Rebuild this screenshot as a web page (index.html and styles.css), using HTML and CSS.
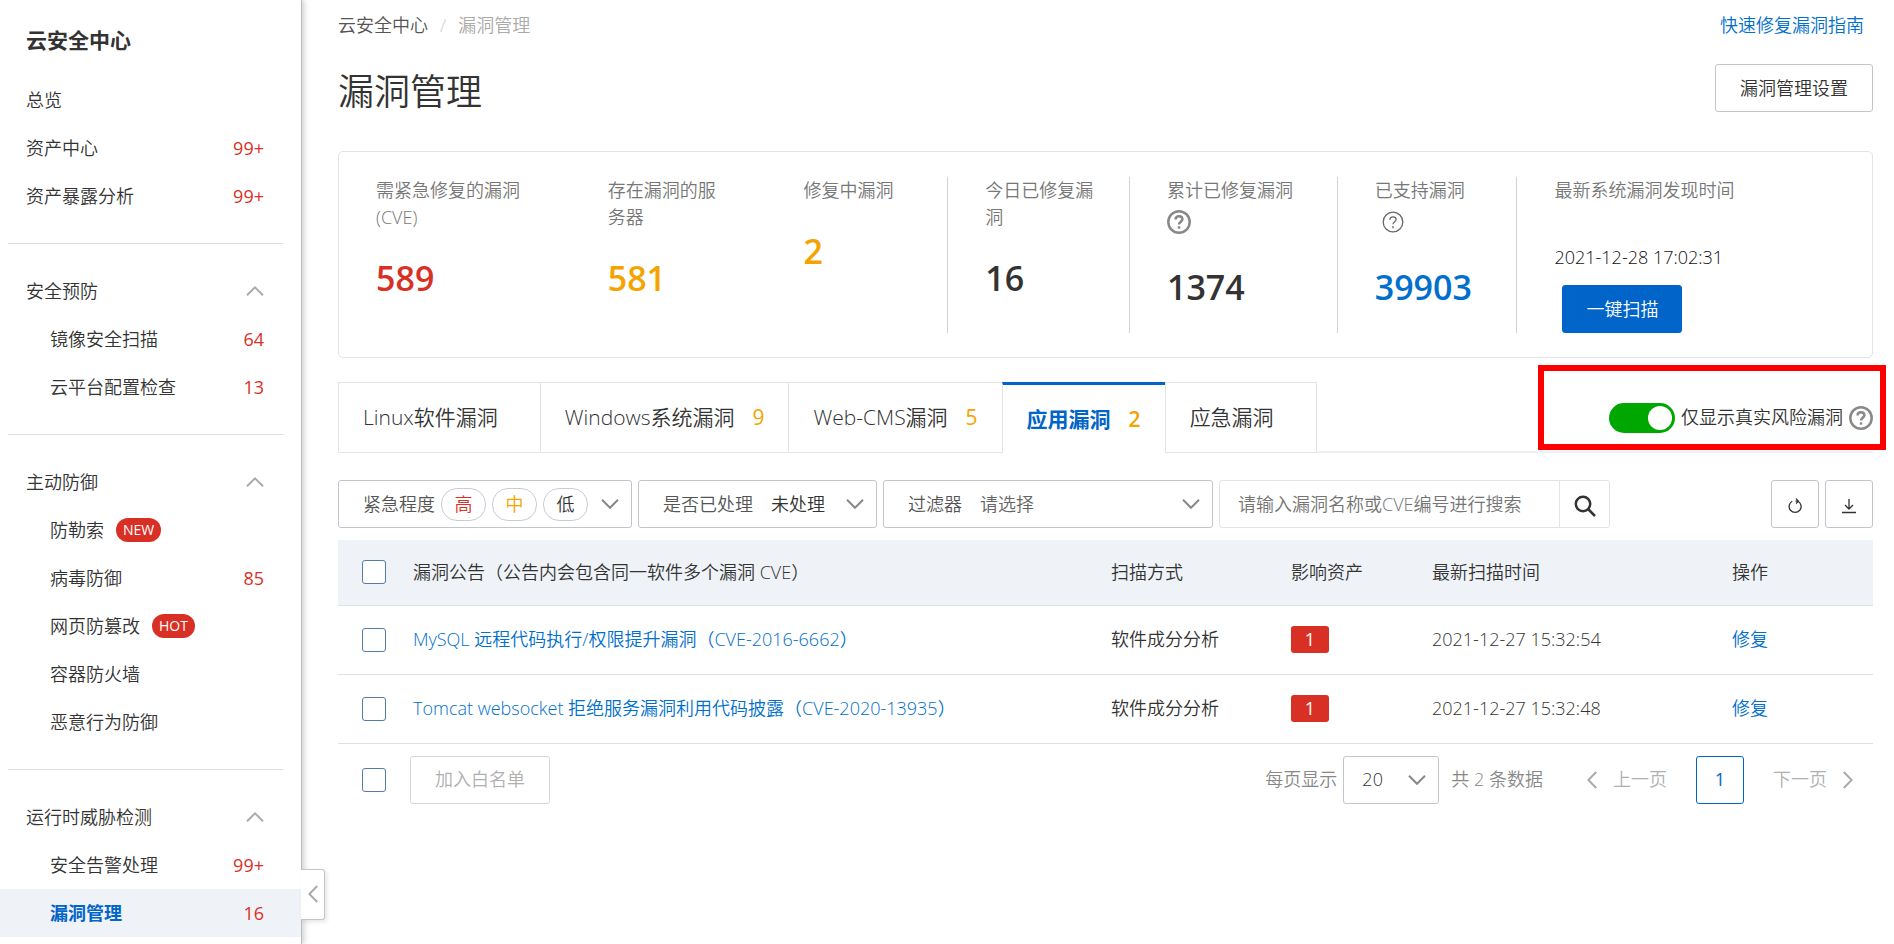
FILE: index.html
```html
<!DOCTYPE html>
<html lang="zh-CN">
<head>
  <meta charset="UTF-8" />
  <meta name="viewport" content="width=device-width, initial-scale=1.0"/>
  <title>漏洞管理 - 云安全中心</title>
  <link rel="stylesheet" href="styles.css">
</head>
<body>
  <svg class="sprite" aria-hidden="true">
    <symbol id="i-up" viewBox="0 0 18 10"><path d="M1 9.2 9 1.4l8 7.8"/></symbol>
    <symbol id="i-down" viewBox="0 0 18 10"><path d="M1 .8 9 8.8l8-8"/></symbol>
    <symbol id="i-left" viewBox="0 0 10 18"><path d="M9.2 1 1.4 9l7.8 8"/></symbol>
    <symbol id="i-right" viewBox="0 0 10 18"><path d="M.8 1 8.6 9 .8 17"/></symbol>
    <symbol id="i-help" viewBox="0 0 24 24">
      <circle cx="12" cy="12" r="10.7"/>
      <path d="M8.6 9.6c0-2 1.4-3.3 3.4-3.3s3.4 1.2 3.4 3c0 2.3-3.4 2.6-3.4 5.2"/>
      <path d="M12 16.3v2.4"/>
    </symbol>
  </svg>

  <div class="layout">
    <aside class="sidebar">
      <h2 class="sidebar-title">云安全中心</h2>
      <nav>
        <ul class="menu">
          <li><a class="item" href="#">总览</a></li>
          <li><a class="item" href="#">资产中心<span class="num">99+</span></a></li>
          <li><a class="item" href="#">资产暴露分析<span class="num">99+</span></a></li>
        </ul>
        <ul class="menu">
          <li><button class="item" type="button">安全预防<svg class="arrow"><use href="#i-up"/></svg></button></li>
          <li><a class="item sub" href="#">镜像安全扫描<span class="num">64</span></a></li>
          <li><a class="item sub" href="#">云平台配置检查<span class="num">13</span></a></li>
        </ul>
        <ul class="menu">
          <li><button class="item" type="button">主动防御<svg class="arrow"><use href="#i-up"/></svg></button></li>
          <li><a class="item sub" href="#">防勒索<span class="tag">NEW</span></a></li>
          <li><a class="item sub" href="#">病毒防御<span class="num">85</span></a></li>
          <li><a class="item sub" href="#">网页防篡改<span class="tag">HOT</span></a></li>
          <li><a class="item sub" href="#">容器防火墙</a></li>
          <li><a class="item sub" href="#">恶意行为防御</a></li>
        </ul>
        <ul class="menu">
          <li><button class="item" type="button">运行时威胁检测<svg class="arrow"><use href="#i-up"/></svg></button></li>
          <li><a class="item sub" href="#">安全告警处理<span class="num">99+</span></a></li>
          <li><a class="item sub active" href="#"><b>漏洞管理</b><span class="num">16</span></a></li>
        </ul>
      </nav>
      <button class="collapse" type="button" aria-label="收起"><svg class="arrow-v"><use href="#i-left"/></svg></button>
    </aside>

    <main class="main">
      <div class="crumbs">
        <a href="#">云安全中心</a><span class="slash">/</span><span class="current">漏洞管理</span>
        <a class="guide" href="#">快速修复漏洞指南</a>
      </div>
      <div class="heading">
        <h1>漏洞管理</h1>
        <button class="btn" type="button">漏洞管理设置</button>
      </div>

      <section class="stats">
        <div class="stat">
          <div class="label">需紧急修复的漏洞(CVE)</div>
          <div class="value red">589</div>
        </div>
        <div class="stat">
          <div class="label">存在漏洞的服务器</div>
          <div class="value orange">581</div>
        </div>
        <div class="stat">
          <div class="label">修复中漏洞</div>
          <div class="value orange">2</div>
        </div>
        <div class="stat line">
          <div class="label">今日已修复漏洞</div>
          <div class="value">16</div>
        </div>
        <div class="stat line">
          <div class="label">累计已修复漏洞 <svg class="help"><use href="#i-help"/></svg></div>
          <div class="value">1374</div>
        </div>
        <div class="stat line">
          <div class="label">已支持漏洞 <svg class="help thin"><use href="#i-help"/></svg></div>
          <div class="value blue">39903</div>
        </div>
        <div class="stat line">
          <div class="label">最新系统漏洞发现时间</div>
          <div class="time">2021-12-28 17:02:31</div>
          <button class="btn primary" type="button">一键扫描</button>
        </div>
      </section>

      <div class="tabs">
        <button class="tab" type="button">Linux软件漏洞<span></span></button>
        <button class="tab" type="button">Windows系统漏洞<span>9</span></button>
        <button class="tab" type="button">Web-CMS漏洞<span>5</span></button>
        <button class="tab selected" type="button">应用漏洞<span>2</span></button>
        <button class="tab" type="button">应急漏洞<span></span></button>
        <div class="risk">
          <input class="switch" type="checkbox" id="real-risk" checked>
          <label for="real-risk">仅显示真实风险漏洞</label>
          <svg class="help"><use href="#i-help"/></svg>
          <div class="highlight"></div>
        </div>
      </div>

      <div class="filters">
        <button class="box level" type="button">
          紧急程度
          <span class="pill red">高</span><span class="pill orange">中</span><span class="pill">低</span>
          <svg class="arrow"><use href="#i-down"/></svg>
        </button>
        <div class="box handled">
          <label for="handled">是否已处理</label>
          <select id="handled"><option>未处理</option></select>
          <svg class="arrow"><use href="#i-down"/></svg>
        </div>
        <div class="box filter">
          <label for="filter">过滤器</label>
          <select id="filter" class="empty"><option>请选择</option></select>
          <svg class="arrow"><use href="#i-down"/></svg>
        </div>
        <div class="search">
          <input type="text" placeholder="请输入漏洞名称或CVE编号进行搜索" aria-label="搜索漏洞">
          <button type="button" aria-label="搜索">
            <svg class="lens" viewBox="0 0 22 22"><circle cx="9" cy="9" r="7.2"/><path d="m14 14 7 7"/></svg>
          </button>
        </div>
        <button class="btn square first" type="button" aria-label="刷新">
          <svg class="tool" viewBox="0 0 16 16"><path d="M5.2 3.2A6 6 0 1 0 11 3.2H8.5M9 .6 11.4 3.2 9 5.6"/></svg>
        </button>
        <button class="btn square" type="button" aria-label="下载">
          <svg class="tool" viewBox="0 0 16 16"><path d="M8 1v10M4 7l4 4 4-4M1 14.5h14"/></svg>
        </button>
      </div>

      <table class="vulns">
        <thead>
          <tr>
            <th class="c-check"><input type="checkbox" aria-label="全选"></th>
            <th>漏洞公告（公告内会包含同一软件多个漏洞 CVE）</th>
            <th class="c-mode">扫描方式</th>
            <th class="c-asset">影响资产</th>
            <th class="c-time">最新扫描时间</th>
            <th class="c-op">操作</th>
          </tr>
        </thead>
        <tbody>
          <tr>
            <td class="c-check"><input type="checkbox" aria-label="选择 CVE-2016-6662"></td>
            <td><a href="#">MySQL 远程代码执行/权限提升漏洞（CVE-2016-6662）</a></td>
            <td>软件成分分析</td>
            <td><span class="count">1</span></td>
            <td>2021-12-27 15:32:54</td>
            <td><a href="#">修复</a></td>
          </tr>
          <tr>
            <td class="c-check"><input type="checkbox" aria-label="选择 CVE-2020-13935"></td>
            <td><a href="#">Tomcat websocket 拒绝服务漏洞利用代码披露（CVE-2020-13935）</a></td>
            <td>软件成分分析</td>
            <td><span class="count">1</span></td>
            <td>2021-12-27 15:32:48</td>
            <td><a href="#">修复</a></td>
          </tr>
        </tbody>
      </table>

      <div class="footer">
        <input type="checkbox" aria-label="全选本页">
        <button class="btn" type="button" disabled>加入白名单</button>
        <div class="pager">
          <label for="size">每页显示</label>
          <div class="box size">
            <select id="size"><option>20</option></select>
            <svg class="arrow"><use href="#i-down"/></svg>
          </div>
          <span class="total">共 2 条数据</span>
          <button class="turn" type="button" disabled><svg class="arrow-v"><use href="#i-left"/></svg>上一页</button>
          <button class="page" type="button">1</button>
          <button class="turn" type="button" disabled>下一页<svg class="arrow-v"><use href="#i-right"/></svg></button>
        </div>
      </div>
    </main>
  </div>
</body>
</html>
```
FILE: styles.css
```css
* {
  margin: 0;
  padding: 0;
  box-sizing: border-box;
}
body {
  font-family: "Open Sans", "Noto Sans CJK SC", sans-serif;
  font-size: 18px;
  font-weight: 350;
  line-height: 27px;
  color: #333;
  background: #fff;
}
button, input, select {
  font: inherit;
  color: inherit;
  background: none;
  border: 0;
}
a {
  color: #0070cc;
  text-decoration: none;
}
ul {
  list-style: none;
}
svg {
  flex-shrink: 0;
  fill: none;
  stroke: #aaa;
  stroke-width: 2;
}
.sprite {
  display: none;
}
.arrow {
  width: 18px;
  height: 10px;
}
.arrow-v {
  width: 10px;
  height: 18px;
}
.red { color: #d93026; }
.orange { color: #f5a300; }
.blue { color: #0070cc; }

.layout {
  display: flex;
  min-height: 100vh;
}

/* 左侧菜单 */
.sidebar {
  position: relative;
  flex: 0 0 302px;
  border-right: 1px solid #bbb;
  box-shadow: 2px 0 6px rgba(0, 0, 0, 0.2);
}
.sidebar-title {
  padding: 24px 26px 20px;
  font-size: 21px;
  font-weight: 700;
  line-height: 32px;
}
.menu + .menu::before {
  content: "";
  display: block;
  height: 1px;
  margin: 23px 18px 23px 8px;
  background: #dedede;
}
.item {
  display: flex;
  align-items: center;
  width: 100%;
  height: 48px;
  padding: 0 37px 0 26px;
  color: #333;
}
.item.sub {
  padding-left: 50px;
}
.item .num {
  margin-left: auto;
  font-weight: 400;
  color: #d93026;
}
.item .arrow {
  margin-left: auto;
}
.item .tag {
  margin-left: 12px;
  padding: 0 7px;
  font-size: 14px;
  font-weight: 400;
  line-height: 24px;
  color: #fff;
  background: #d93026;
  border-radius: 12px;
}
.item.active {
  background: #eff3f8;
}
.item.active b {
  font-weight: 700;
  color: #0064c8;
}
.collapse {
  position: absolute;
  left: 100%;
  bottom: 24px;
  width: 24px;
  height: 51px;
  padding-top: 4px;
  background: #fff;
  border: 1px solid #c0c6cc;
  border-left: 0;
  border-radius: 0 3px 3px 0;
  box-shadow: 2px 2px 4px rgba(0, 0, 0, 0.1);
}

/* 主体 */
.main {
  flex: 1;
  min-width: 0;
  padding: 12px 21px 0 36px;
}
.crumbs {
  display: flex;
}
.crumbs a {
  color: #555;
}
.crumbs .slash {
  margin: 0 12px;
  color: #ccc;
}
.crumbs .current {
  color: #aaa;
}
.crumbs .guide {
  margin: 0 9px 0 auto;
  color: #0070cc;
}
.heading {
  display: flex;
  align-items: flex-start;
  justify-content: space-between;
  margin-top: 25px;
}
h1 {
  font-size: 36px;
  font-weight: 350;
  line-height: 55px;
}
.btn {
  height: 48px;
  padding: 0 24px;
  border: 1px solid #c0c6cc;
  border-radius: 3px;
}
.btn.primary {
  margin: 14px 0 0 8px;
  padding: 0 23px;
  color: #fff;
  background: #0064c8;
  border-color: #0064c8;
}
.btn.square {
  width: 48px;
  padding: 0;
}
.btn.square svg {
  vertical-align: middle;
}
.btn:disabled {
  color: #b0b0b0;
  border-color: #d5d8dc;
}
.help {
  width: 24px;
  height: 24px;
  stroke: #888;
  stroke-width: 2.5;
}

.stats {
  display: grid;
  grid-template-columns: 232fr 196fr 181fr 182fr 208fr 180fr 356fr;
  margin-top: 32px;
  padding: 25px 0 24px;
  border: 1px solid #e3e4e6;
  border-radius: 5px;
}
.stat {
  min-height: 156px;
  padding: 0 34px 0 37px;
}
.stat.line {
  border-left: 1px solid #d0d2d6;
}
.stat .label {
  color: #777;
}
.stat .help {
  margin: 6px 0;
  vertical-align: bottom;
}
.stat .help.thin {
  width: 22px;
  height: 22px;
  margin: 7px;
  stroke: #666;
  stroke-width: 1.4;
}
.stat .value {
  margin-top: 27px;
  font-size: 34px;
  font-weight: 600;
  line-height: 40px;
}
.stat .time {
  margin-top: 40px;
  color: #111;
}

.tabs {
  position: relative;
  display: flex;
  margin-top: 24px;
  box-shadow: inset 0 -2px #f0f0f0;
}
.tab {
  display: flex;
  align-items: center;
  height: 71px;
  padding: 0 24px;
  font-size: 21px;
  background: #fff;
  border: 1px solid #e3e4e6;
  border-right: 0;
}
.tab span {
  margin-left: 18px;
  font-weight: 400;
  color: #f5a300;
}
.tab:nth-child(5) {
  border-right: 1px solid #e3e4e6;
}
.tab.selected {
  font-weight: 700;
  color: #0064c8;
  border-top: 3px solid #0064c8;
  border-bottom: 0;
}
.tab.selected span {
  font-weight: 600;
}
.risk {
  position: relative;
  display: flex;
  align-items: center;
  margin-left: auto;
}
.risk label {
  margin: 0 6px;
}
.switch {
  appearance: none;
  width: 66px;
  height: 30px;
  padding: 3px;
  background: #00a700;
  border-radius: 15px;
}
.switch::before {
  content: "";
  display: block;
  width: 24px;
  height: 24px;
  margin-left: auto;
  background: #fff;
  border-radius: 50%;
}
/* 红框标注 */
.highlight {
  position: absolute;
  top: -17px;
  right: -13px;
  bottom: 3px;
  left: -71px;
  border: 6px solid #f00;
  pointer-events: none;
}

.filters {
  display: flex;
  gap: 6px;
  margin-top: 27px;
}
.box {
  position: relative;
  display: flex;
  align-items: center;
  height: 48px;
  padding: 0 12px 0 24px;
  color: #555;
  border: 1px solid #c0c6cc;
  border-radius: 3px;
}
.box .arrow {
  position: absolute;
  right: 12px;
  top: 18px;
  stroke: #888;
  pointer-events: none;
}
.box select {
  flex: 1;
  min-width: 0;
  height: 46px;
  padding-left: 18px;
  color: #333;
  appearance: none;
}
.box select.empty {
  color: #666;
}
.level {
  width: 294px;
}
.handled {
  width: 239px;
}
.filter {
  width: 330px;
}
.pill {
  width: 45px;
  height: 33px;
  margin-left: 6px;
  line-height: 31px;
  text-align: center;
  border: 1px solid #c8ccd4;
  border-radius: 16px;
}
.pill:not(.red):not(.orange) {
  color: #333;
}
.search {
  display: flex;
  width: 391px;
  border: 1px solid #e3e4e6;
  border-radius: 3px;
}
.search input {
  flex: 1;
  min-width: 0;
  padding-left: 18px;
}
.search input::placeholder {
  color: #757575;
}
.search button {
  width: 50px;
  border-left: 1px solid #e3e4e6;
}
.lens {
  width: 22px;
  height: 22px;
  stroke: #333;
  stroke-width: 2.5;
  vertical-align: middle;
}
.tool {
  width: 16px;
  height: 16px;
  stroke: #333;
  stroke-width: 1.3;
}
.square.first {
  margin-left: auto;
}

/* 漏洞列表 */
.vulns {
  width: 100%;
  margin-top: 12px;
  table-layout: fixed;
  border-collapse: collapse;
}
.vulns th {
  height: 65px;
  font-weight: 350;
  text-align: left;
  background: #eff3f8;
}
.vulns td {
  height: 69px;
}
.vulns tr {
  border-bottom: 1px solid #dfe1e5;
}
.c-check { width: 75px; }
.c-mode { width: 180px; }
.c-asset { width: 141px; }
.c-time { width: 300px; }
.c-op { width: 141px; }
.vulns input, .footer > input {
  display: block;
  appearance: none;
  width: 24px;
  height: 24px;
  margin-left: 24px;
  background: #fff;
  border: 1px solid #577ba8;
  border-radius: 3px;
}
.count {
  display: block;
  width: 38px;
  font-weight: 400;
  text-align: center;
  color: #fff;
  background: #d93026;
  border-radius: 3px;
}
.footer {
  display: flex;
  align-items: center;
  gap: 24px;
  margin-top: 12px;
}
.pager {
  display: flex;
  align-items: center;
  margin-left: auto;
  color: #888;
}
.size {
  width: 96px;
  margin: 0 12px 0 6px;
  padding: 0;
}
.total {
  margin-right: 24px;
}
.turn {
  display: flex;
  align-items: center;
  gap: 16px;
  padding: 0 20px;
  color: #b0b0b0;
}
.page {
  width: 48px;
  height: 48px;
  margin: 0 9px;
  font-weight: 400;
  color: #0064c8;
  border: 1px solid #0064c8;
  border-radius: 3px;
}
```
